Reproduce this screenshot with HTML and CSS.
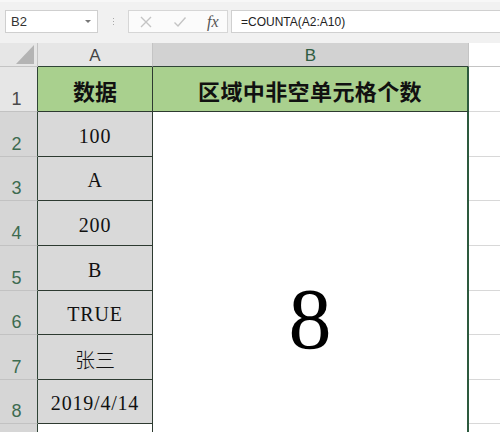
FILE: index.html
```html
<!DOCTYPE html>
<html>
<head>
<meta charset="utf-8">
<link rel="stylesheet" href="styles.css">
</head>
<body>
<div class="app">
  <div class="fbar">
    <div class="namebox"><span class="ref">B2</span><span class="caret"></span></div>
    <div class="grip"><i></i><i></i><i></i></div>
    <div class="btns">
      <svg class="ic" width="14" height="14" viewBox="0 0 14 14"><path d="M2 2 L12 12 M12 2 L2 12" stroke="#c4c4c4" stroke-width="1.4" fill="none"/></svg>
      <svg class="ic" width="14" height="14" viewBox="0 0 14 14"><path d="M1.5 7.5 L5 11 L12.5 2.5" stroke="#c4c4c4" stroke-width="1.4" fill="none"/></svg>
      <span class="fx">fx</span>
    </div>
    <div class="formula">=COUNTA(A2:A10)</div>
  </div>
  <div class="sheet">
    <div class="corner"><div class="tri"></div></div>
    <div class="ch">A</div>
    <div class="ch sel">B</div>
    <div class="ch cc"></div>

    <div class="rh r1">1</div>
    <div class="ca head">数据</div>
    <div class="cb head">区域中非空单元格个数</div>
    <div class="cc"></div>

    <div class="rh">2</div>
    <div class="ca val">100</div>
    <div class="merged">8</div>
    <div class="cc"></div>

    <div class="rh">3</div>
    <div class="ca val">A</div>
    <div class="cc"></div>

    <div class="rh">4</div>
    <div class="ca val">200</div>
    <div class="cc"></div>

    <div class="rh">5</div>
    <div class="ca val">B</div>
    <div class="cc"></div>

    <div class="rh">6</div>
    <div class="ca val">TRUE</div>
    <div class="cc"></div>

    <div class="rh">7</div>
    <div class="ca val cjk">张三</div>
    <div class="cc"></div>

    <div class="rh">8</div>
    <div class="ca val">2019/4/14</div>
    <div class="cc"></div>

    <div class="rh"></div>
    <div class="ca blank"></div>
    <div class="cc"></div>

    <div class="rh"></div>
    <div class="ca blank"></div>
    <div class="cc"></div>
  </div>
</div>
</body>
</html>
```
FILE: styles.css
```css
html, body {
  margin: 0;
  padding: 0;
  overflow: hidden;
  background: #ffffff;
}
.app {
  width: 500px;
  height: 432px;
  overflow: hidden;
  font-family: "Liberation Sans", Arial, sans-serif;
}
.fbar {
  height: 43px;
  box-sizing: border-box;
  background: #f1f1f1;
  border-top: 2px solid #f7f7f7;
  padding-top: 8px;
  display: flex;
  align-items: flex-start;
}
.namebox {
  margin-left: 5px;
  width: 93px;
  height: 23px;
  box-sizing: border-box;
  background: #fff;
  border: 1px solid #cfcfcf;
  display: flex;
  align-items: center;
  justify-content: space-between;
  padding: 0 6px 0 5px;
}
.ref {
  font-size: 13px;
  color: #333;
}
.caret {
  width: 0;
  height: 0;
  border-left: 3px solid transparent;
  border-right: 3px solid transparent;
  border-top: 3px solid #777;
}
.grip {
  width: 30px;
  height: 23px;
  display: flex;
  flex-direction: column;
  align-items: center;
  justify-content: center;
  gap: 2px;
}
.grip i {
  display: block;
  width: 1px;
  height: 1px;
  background: #a8a8a8;
}
.btns {
  width: 100px;
  height: 23px;
  box-sizing: border-box;
  background: #fbfbfb;
  border: 1px solid #d6d6d6;
  display: flex;
  align-items: center;
  padding-left: 10px;
  gap: 20px;
}
.fx {
  font-family: "Liberation Serif", serif;
  font-style: italic;
  font-size: 16px;
  color: #555;
}
.formula {
  margin-left: 3px;
  flex: 1;
  height: 23px;
  box-sizing: border-box;
  background: #fff;
  border: 1px solid #d0d0d0;
  border-right: none;
  font-size: 12px;
  color: #222;
  display: flex;
  align-items: center;
  padding-left: 9px;
}
.sheet {
  display: grid;
  grid-template-columns: 38px 115px 316px 1fr;
  grid-template-rows: 24px 45px 45px 44px 45px 45px 44px 45px 44px 45px 45px;
}
.sheet > div {
  box-sizing: border-box;
}
.corner {
  background: #e6e6e6;
  border-right: 1px solid #c4c4c4;
  border-bottom: 1px solid #c4c4c4;
  display: flex;
  justify-content: flex-end;
  align-items: flex-end;
  padding: 0 3px 2px 0;
}
.tri {
  width: 18px;
  height: 19px;
  background: #b4b4b4;
  clip-path: polygon(100% 0, 100% 100%, 0 100%);
}
.ch {
  background: #e6e6e6;
  border-right: 1px solid #c4c4c4;
  border-bottom: 1px solid #2f4436;
  display: flex;
  justify-content: center;
  align-items: center;
  padding-top: 2px;
  font-size: 17px;
  color: #444;
}
.ch.sel {
  background: #d2d2d2;
  color: #2f5d42;
}
.ch.cc {
  border-bottom: 1px solid #c4c4c4;
  border-right: none;
}
.rh {
  grid-column: 1;
  background: #d6d6d6;
  border-right: 1px solid #2f4436;
  border-bottom: 1px solid #c2c2c2;
  display: flex;
  justify-content: center;
  align-items: flex-end;
  padding-bottom: 1px;
  padding-right: 4px;
  font-size: 18px;
  color: #3d6b50;
}
.rh.r1 {
  background: #e6e6e6;
  color: #4a4a4a;
}
.ca {
  grid-column: 2;
  background: #d9d9d9;
  border-right: 1px solid #2d3a30;
  border-bottom: 1px solid #2d3a30;
  display: flex;
  justify-content: center;
  align-items: center;
}
.ca.blank {
  background: #fff;
  border-bottom: 1px solid #d4d4d4;
}
.head {
  background: #a9d08e;
  font-family: "Noto Sans CJK SC", sans-serif;
  font-weight: 700;
  font-size: 22px;
  color: #111;
  display: flex;
  justify-content: center;
  align-items: center;
  border-bottom: 1px solid #2d3a30;
  padding-top: 2px;
}
.ca.head {
  background: #a9d08e;
}
.cb.head {
  grid-column: 3;
  border-right: 2px solid #2d5a3e;
  letter-spacing: 0.4px;
}
.val {
  font-family: "Liberation Serif", "Noto Sans CJK SC", serif;
  font-size: 20px;
  letter-spacing: 0.8px;
  color: #111;
  padding-top: 4px;
}
.val.cjk {
  font-family: "Noto Sans CJK SC", sans-serif;
  font-weight: 300;
  font-size: 20px;
  letter-spacing: 0;
}
.merged {
  grid-column: 3;
  grid-row: 3 / span 9;
  background: #fff;
  border-right: 2px solid #2d5a3e;
  display: flex;
  justify-content: center;
  align-items: center;
  font-family: "Liberation Serif", serif;
  font-size: 86px;
  color: #000;
  padding-top: 12px;
}
.cc {
  grid-column: 4;
  background: #fff;
  border-bottom: 1px solid #d8d8d8;
}
```
